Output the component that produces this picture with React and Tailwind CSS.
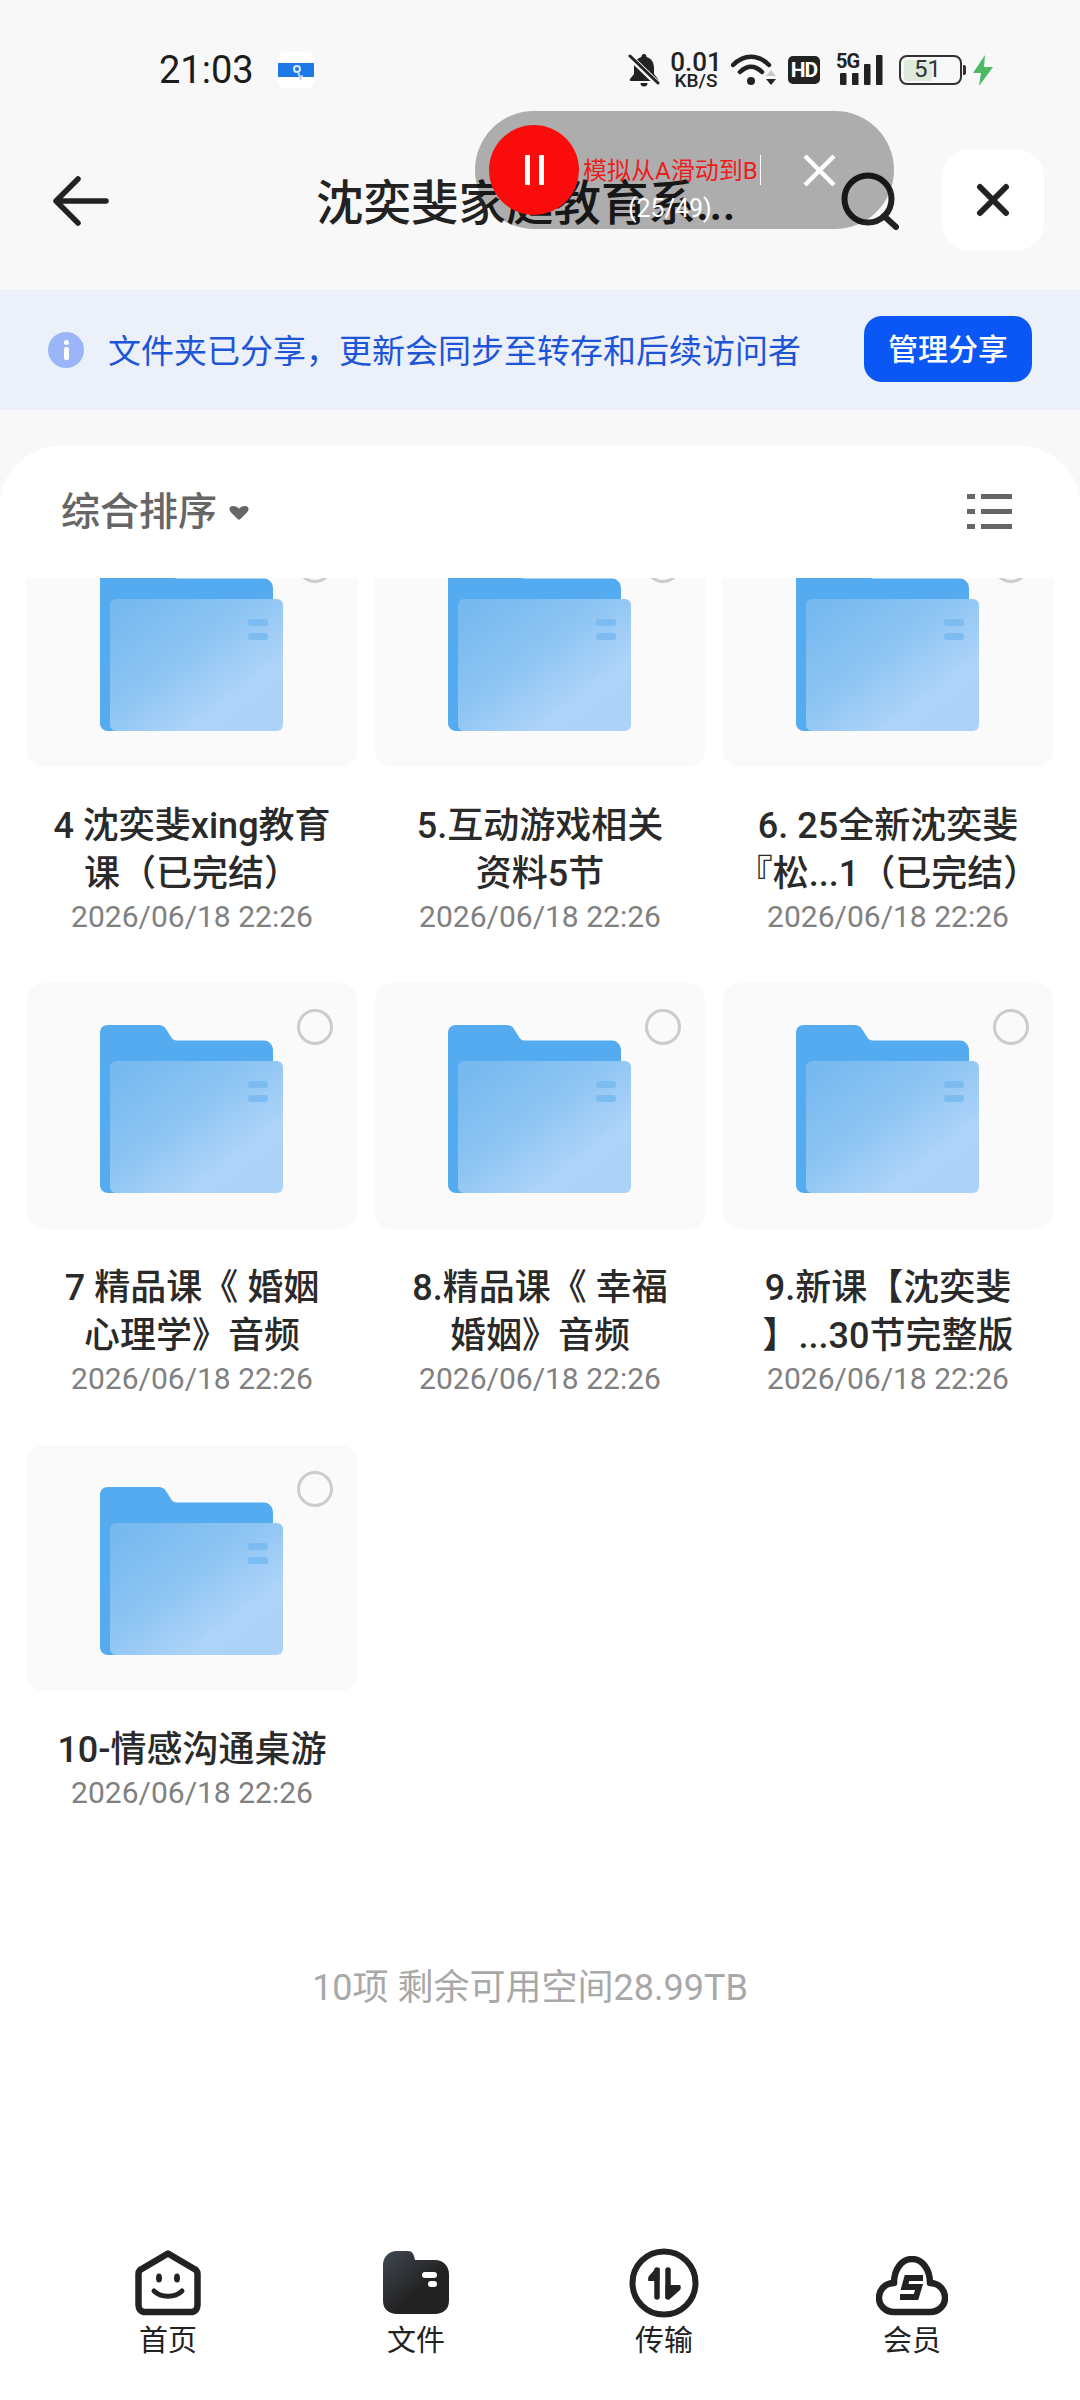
const font = { fontFamily: '"Roboto","Noto Sans CJK SC",sans-serif' };

const items = [
  ["4 沈奕斐xing教育", "课（已完结）"],
  ["5.互动游戏相关", "资料5节"],
  ["6. 25全新沈奕斐", "『松...1（已完结）"],
  ["7 精品课《 婚姻", "心理学》音频"],
  ["8.精品课《 幸福", "婚姻》音频"],
  ["9.新课【沈奕斐", "】...30节完整版"],
  ["10-情感沟通桌游"],
];

function Folder({ id }) {
  return (
    <svg width="183" height="168" viewBox="0 0 183 168" className="block">
      <defs>
        <linearGradient id={id} x1="0.1" y1="0.1" x2="0.85" y2="0.85">
          <stop offset="0" stopColor="#78baf0" />
          <stop offset="0.45" stopColor="#8ec5f3" />
          <stop offset="0.85" stopColor="#afd4f9" />
          <stop offset="1" stopColor="#acd2f8" />
        </linearGradient>
      </defs>
      <path d="M8 0H58C62 0 64 1 66 4L71 12C72 14 74 15.500 77 15.500H164C169 15.500 173 20 173 25V60H20V168H8C3 168 0 164 0 160V8C0 3 3 0 8 0Z" fill="#55abf0" />
      <rect x="10" y="36" width="173" height="132" rx="6" fill={`url(#${id})`} />
      <rect x="148" y="56" width="20" height="7" rx="3" fill="#7dbcf1" />
      <rect x="148" y="70" width="20" height="7" rx="3" fill="#7dbcf1" />
    </svg>
  );
}

function Card({ lines, idx }) {
  return (
    <div className="flex flex-col items-center">
      <div className="relative flex h-[246px] w-[330px] items-start justify-center rounded-[16px] bg-[#fafafa] pt-[42px]">
        <div className="mr-[1px]"><Folder id={`f${idx}`} /></div>
        <div className="absolute right-[24px] top-[26px] h-[36px] w-[36px] rounded-full border-[3px] border-[#cccccc]" />
      </div>
      <div className="mt-[35px] w-full text-center text-[36px] leading-[48px] font-medium text-[#2a2a2a] whitespace-nowrap">
        {lines.map((l) => <div key={l}>{l}</div>)}
      </div>
      <div className="mt-[-1px] text-[30px] leading-[40px] text-[#808080]">2026/06/18 22:26</div>
    </div>
  );
}

function StatusIcons() {
  return (
    <div className="ml-auto mr-[87px] flex items-center">
      <svg width="32" height="34" viewBox="0 0 32 34">
        <path d="M16 1a2.5 2.5 0 0 1 2.5 3C24 5.5 26 10 26 15v6l4 5c.6 1 0 2-1 2H3c-1 0-1.6-1-1-2l4-5v-6C6 10 8 5.500 13.500 4A2.500 2.500 0 0 1 16 1Z" fill="#222" />
        <path d="M12.500 30h7a3.500 3.500 0 0 1-7 0Z" fill="#222" />
        <path d="M2 4 30 31" stroke="#f8f8f8" strokeWidth="6" />
        <path d="M2 3 30 30" stroke="#222" strokeWidth="3" strokeLinecap="round" />
      </svg>
      <div className="ml-[12px] flex w-[48px] flex-col items-center text-[#222]">
        <span className="text-[26px] leading-[20px] font-medium">0.01</span>
        <span className="text-[19px] leading-[17px] font-medium">KB/S</span>
      </div>
      <svg className="ml-[11px]" width="45" height="34" viewBox="0 0 45 34">
        <path d="M2 12C13 1 27 1 38 12" fill="none" stroke="#222" strokeWidth="4.500" strokeLinecap="round" />
        <path d="M9 19C16 12 24 12 31 19" fill="none" stroke="#222" strokeWidth="4.500" strokeLinecap="round" />
        <circle cx="20" cy="28" r="4" fill="#222" />
        <path d="M35 23 40 17 45 23Z" fill="#c8c8c8" />
        <path d="M35 26H45L40 32Z" fill="#222" />
      </svg>
      <div className="ml-[12px] flex h-[28px] w-[32px] items-center justify-center rounded-[5px] bg-[#222] text-[21px] leading-none font-bold tracking-[-1px] text-white">HD</div>
      <div className="relative ml-[16px] h-[34px] w-[47px]">
        <svg width="47" height="34" viewBox="0 0 47 34" className="block">
          <rect x="4" y="20" width="6.500" height="12" fill="#222" rx="1" />
          <rect x="16" y="20" width="6.500" height="12" fill="#222" rx="1" />
          <rect x="28" y="11" width="6.500" height="21" fill="#222" rx="1" />
          <rect x="40" y="2" width="6.500" height="30" fill="#222" rx="1" />
        </svg>
        <span className="absolute left-0 top-0 text-[20px] leading-[17px] font-bold tracking-[-1px] text-[#222]">5G</span>
      </div>
      <div className="relative ml-[16px] flex h-[30px] w-[63px] items-center rounded-[8px] border-[2.5px] border-[#333] pl-[3px]">
        <div className="h-[21px] w-[28px] rounded-[3px] bg-[#dcebdc]" />
        <span className="absolute left-[13px] top-0 text-[24px] leading-[25px] text-[#333]">51</span>
      </div>
      <div className="ml-[1px] h-[10px] w-[3px] rounded-r-[2px] bg-[#333]" />
      <svg className="ml-[7px]" width="20" height="31" viewBox="0 0 20 31">
        <path d="M12 0 0 18H8L6 31 20 12H11Z" fill="#4cb963" />
      </svg>
    </div>
  );
}

function NavItem({ label, children }) {
  return (
    <div className="flex w-[248px] flex-col items-center">
      <div className="flex h-[72px] items-center justify-center">{children}</div>
      <div className="mt-[7px] text-[29px] leading-[30px] text-[#222]">{label}</div>
    </div>
  );
}

export default function App() {
  return (
    <div className="relative flex h-[2400px] w-[1080px] flex-col overflow-hidden bg-[#f8f8f8]" style={font}>
      {/* status bar */}
      <div className="flex h-[110px] items-center pt-[30px] pl-[159px]">
        <span className="text-[38px] leading-none text-[#1c1c1c]">21:03</span>
        <svg className="ml-[24px]" width="36" height="36" viewBox="0 0 36 36">
          <rect width="36" height="36" rx="7" fill="#fff" />
          <rect y="11" width="36" height="14" fill="#1e78e6" />
          <circle cx="19" cy="17" r="3" fill="none" stroke="#dbe9fb" strokeWidth="2" />
          <path d="M20 20 23 28M22 25 25 24" stroke="#b9d6f8" strokeWidth="2" fill="none" />
        </svg>
        <StatusIcons />
      </div>

      {/* title row */}
      <div className="flex h-[180px] items-center pr-[36px] pl-[52px]">
        <svg width="58" height="50" viewBox="0 0 58 50" className="mt-[1px]">
          <path d="M26 3 4 25 26 47M5 25H54" fill="none" stroke="#222" strokeWidth="5.500" strokeLinecap="round" strokeLinejoin="round" />
        </svg>
        <div className="mt-[10px] ml-[206px] text-[47.5px] leading-none font-medium text-[#222]">沈奕斐家庭教育系...</div>
        <svg className="mt-[1px] ml-auto" width="58" height="58" viewBox="0 0 58 58">
          <circle cx="27" cy="27" r="23.500" fill="none" stroke="#222" strokeWidth="6" />
          <path d="M43 44 55 55" stroke="#222" strokeWidth="6" strokeLinecap="round" />
        </svg>
        <div className="ml-[43px] flex h-[102px] w-[102px] items-center justify-center rounded-[28px] bg-white">
          <svg width="34" height="34" viewBox="0 0 34 34">
            <path d="M4 4 30 30M30 4 4 30" stroke="#222" strokeWidth="6" strokeLinecap="round" />
          </svg>
        </div>
      </div>

      {/* shared banner */}
      <div className="flex h-[120px] items-center bg-[#ecf0f9] pr-[48px] pl-[48px]">
        <div className="relative flex h-[36px] w-[36px] flex-col items-center justify-center gap-[2px] rounded-full bg-[#9ab5f8]">
          <div className="h-[5px] w-[5px] rounded-full bg-white" />
          <div className="h-[13px] w-[5px] rounded-[2px] bg-white" />
        </div>
        <span className="mt-[3px] ml-[24px] text-[33px] leading-none whitespace-nowrap text-[#1d55d8]">文件夹已分享，更新会同步至转存和后续访问者</span>
        <div className="mt-[-2px] ml-auto flex h-[66px] w-[168px] items-center justify-center rounded-[18px] bg-[#0b57f5] text-[30px] font-medium text-white">管理分享</div>
      </div>

      {/* panel */}
      <div className="mt-[36px] flex flex-1 flex-col overflow-hidden rounded-t-[60px] bg-white">
        <div className="flex h-[132px] shrink-0 items-center pr-[68px] pl-[61px]">
          <span className="text-[39px] leading-none font-medium text-[#666]">综合排序</span>
          <svg className="mt-[2px] ml-[12px]" width="20" height="14" viewBox="0 0 21 15">
            <path d="M4 0C7 0 9 1 10.500 3C12 1 14 0 17 0C21 0 22 4 19 7L12 14C11 15 10 15 9 14L2 7C-1 4 0 0 4 0Z" fill="#666" />
          </svg>
          <svg className="ml-auto" width="45" height="36" viewBox="0 0 45 36">
            <g fill="#666">
              <rect x="0" y="0" width="8" height="5" />
              <rect x="14" y="0" width="31" height="5" />
              <rect x="0" y="15" width="8" height="5" />
              <rect x="14" y="15" width="31" height="5" />
              <rect x="0" y="30" width="8" height="5" />
              <rect x="14" y="30" width="31" height="5" />
            </g>
          </svg>
        </div>

        <div className="flex flex-1 flex-col overflow-hidden">
          <div className="mt-[-57px] grid shrink-0 grid-cols-[330px_330px_330px] gap-x-[18px] gap-y-[46px] px-[27px]">
            {items.map((lines, i) => <Card key={i} lines={lines} idx={i} />)}
          </div>
          <div className="mt-[150px] pr-[20px] text-center text-[36px] leading-[50px] text-[#a8a8a8]">10项 剩余可用空间28.99TB</div>

          {/* bottom nav */}
          <div className="mt-auto flex px-[44px] pb-[44px]">
            <NavItem label="首页">
              <svg width="66" height="66" viewBox="0 0 66 66">
                <path d="M33 3.500 61 20C62 21 62.500 22 62.500 24V55C62.500 59 60 62 56 62H10C6 62 3.500 59 3.500 55V24C3.500 22 4 21 5 20L33 3.500Z" fill="none" stroke="#222" strokeWidth="6.500" strokeLinejoin="round" />
                <ellipse cx="24" cy="28" rx="3" ry="4.500" fill="#222" />
                <ellipse cx="42" cy="28" rx="3" ry="4.500" fill="#222" />
                <path d="M19 41C26 48 40 48 47 41" fill="none" stroke="#222" strokeWidth="5" strokeLinecap="round" />
              </svg>
            </NavItem>
            <NavItem label="文件">
              <svg width="66" height="64" viewBox="0 0 66 64">
                <defs>
                  <linearGradient id="fileGrad" x1="0.1" y1="0.05" x2="0.6" y2="0.6">
                    <stop offset="0" stopColor="#3d434c" />
                    <stop offset="1" stopColor="#222222" />
                  </linearGradient>
                </defs>
                <path d="M14 0H25C29 0 31 3 32 9H52C60 9 66 15 66 23V50C66 58 60 63 52 63H14C6 63 0 58 0 50V14C0 6 6 0 14 0Z" fill="url(#fileGrad)" />
                <rect x="39" y="21" width="15" height="6" rx="3" fill="#fff" />
                <rect x="45" y="30" width="9" height="6" rx="3" fill="#fff" />
              </svg>
            </NavItem>
            <NavItem label="传输">
              <svg width="70" height="70" viewBox="0 0 70 70">
                <circle cx="35" cy="35" r="31.500" fill="none" stroke="#222" strokeWidth="6" />
                <path d="M28 22V49" stroke="#222" strokeWidth="5.500" strokeLinecap="round" />
                <path d="M30.500 20V33H19.500C19 33 19 29 20 28L27 20Z" fill="#222" />
                <path d="M39 22V49" stroke="#222" strokeWidth="5.500" strokeLinecap="round" />
                <path d="M36.500 50V37H51C52 38 52 41 51 42L42 50Z" fill="#222" />
              </svg>
            </NavItem>
            <NavItem label="会员">
              <svg className="mt-[6px]" width="72" height="60" viewBox="0 0 72 60">
                <path d="M18 56H54C62 56 69 50 69 42C69 33 62 27 54 27C54 13 46 3 36 3C26 3 18 13 18 27C10 27 3 33 3 42C3 50 10 56 18 56Z" fill="none" stroke="#222" strokeWidth="6.500" strokeLinejoin="round" />
                <path d="M47 22H31L28.500 31H43L40 41H24" fill="none" stroke="#222" strokeWidth="6" strokeLinejoin="miter" />
              </svg>
            </NavItem>
          </div>
        </div>
      </div>

      {/* floating recorder pill (over content) */}
      <div className="absolute left-[475px] top-[111px] h-[118px] w-[419px] rounded-[59px] bg-black/30">
        <div className="absolute left-[14px] top-[14px] flex h-[90px] w-[90px] items-center justify-center gap-[9px] rounded-full bg-[#fb0c0c]">
          <div className="h-[30px] w-[5px] rounded-[1px] bg-white" />
          <div className="h-[30px] w-[5px] rounded-[1px] bg-white" />
        </div>
        <div className="absolute left-[108px] top-[45px] text-[24px] leading-[30px] whitespace-nowrap text-[#ee1c1c]">模拟从A滑动到B</div>
        <div className="absolute left-[285px] top-[44px] h-[30px] w-[1px] bg-white" />
        <svg className="absolute left-[328px] top-[43px]" width="33" height="33" viewBox="0 0 33 33">
          <path d="M2 2 31 31M31 2 2 31" stroke="#fff" strokeWidth="4.500" />
        </svg>
        <div className="absolute left-[153px] top-[82px] text-[25px] leading-[32px] text-white">(25/49)</div>
      </div>
    </div>
  );
}
